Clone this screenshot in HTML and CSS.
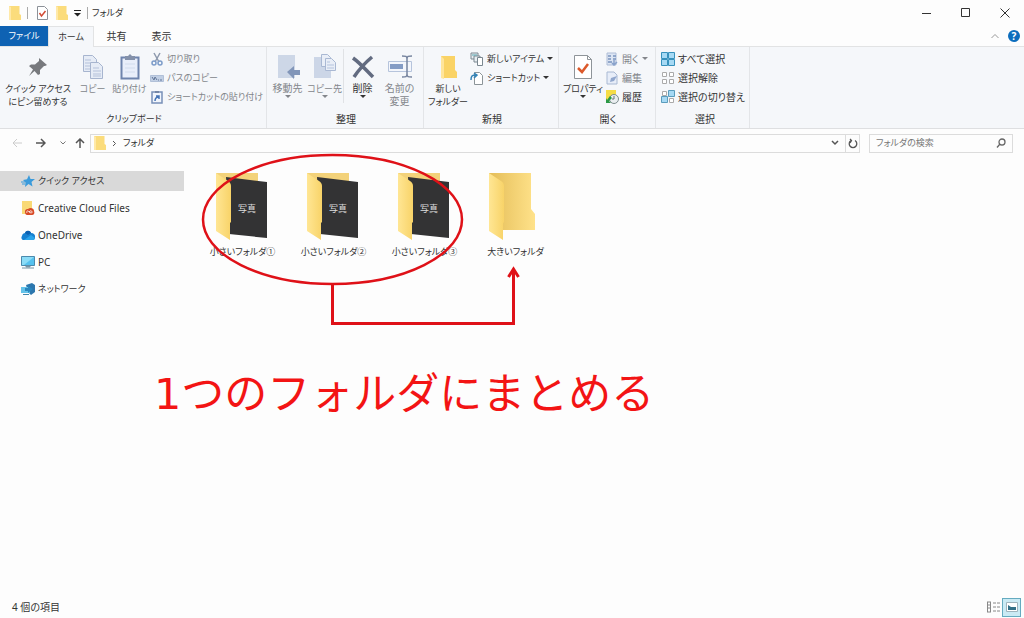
FILE: index.html
```html
<!DOCTYPE html>
<html lang="ja">
<head>
<meta charset="utf-8">
<title>フォルダ</title>
<link rel="stylesheet" href="styles.css">
</head>
<body>
<svg class="defs" aria-hidden="true">
  <defs>
    <linearGradient id="gold" x1="0" x2="1"><stop offset="0" stop-color="#ffe694"/><stop offset="1" stop-color="#f8d368"/></linearGradient>
    <linearGradient id="inner" x1="0" x2="1"><stop offset="0" stop-color="#e4bd58"/><stop offset="1" stop-color="#ffe28a"/></linearGradient>
    <symbol id="mini" viewBox="0 0 12 14"><path d="M0 0h10.500v8l1.500 1v5H0z" fill="#fbdc7c"/><path d="M0 0l2 1v13H0z" fill="#ffe9a8"/></symbol>
    <symbol id="photo-folder" viewBox="2 0 54 70">
      <path d="M2 2h42v20H2z" fill="#f3d27a"/>
      <path d="M12 6l41 5v56l-38-4z" fill="#333334"/>
      <path d="M2 2l12 8c2 1 3 3 3 5v36l-1 1v17L2 60z" fill="url(#gold)"/>
      <text x="33" y="41" text-anchor="middle" class="photo-text">写真</text>
    </symbol>
  </defs>
</svg>
<div class="window">
  <header class="titlebar">
    <svg class="mini" aria-hidden="true"><use href="#mini"/></svg>
    <span class="bar"></span>
    <button class="quick" aria-label="プロパティ"><svg width="11" height="14" viewBox="0 0 11 14"><path d="M.5.5h7l3 3v10H.5z" fill="#fff" stroke="#8c9198"/><path d="M2.500 7l2 3 4-5" fill="none" stroke="#d14b35" stroke-width="1.500"/></svg></button>
    <button class="quick" aria-label="新しいフォルダー"><svg class="mini"><use href="#mini"/></svg></button>
    <button class="quick custom" aria-label="カスタマイズ"><svg width="7" height="7" viewBox="0 0 7 7"><path d="M0 .5h7" stroke="#222"/><path d="M0 3h7L3.500 6.500z" fill="#222"/></svg></button>
    <span class="bar dark"></span>
    <h1 class="title">フォルダ</h1>
    <div class="controls">
      <button aria-label="最小化"><svg width="10" height="10"><path d="M0 5.500h9" stroke="#333"/></svg></button>
      <button aria-label="最大化"><svg width="10" height="10"><path d="M.5.5h8v8h-8z" fill="none" stroke="#333"/></svg></button>
      <button aria-label="閉じる"><svg width="10" height="10"><path d="M.5.500l9 9m0-9l-9 9" stroke="#333"/></svg></button>
    </div>
  </header>
  <nav class="tabs">
    <button class="tab file">ファイル</button>
    <button class="tab active">ホーム</button>
    <button class="tab">共有</button>
    <button class="tab">表示</button>
    <div class="tab-end">
      <button aria-label="リボンを閉じる"><svg width="8" height="6"><path d="M.5 5L4 1.500 7.500 5" fill="none" stroke="#999"/></svg></button>
      <button aria-label="ヘルプ" class="help">?</button>
    </div>
  </nav>
  <section class="ribbon">
    <div class="group clipboard">
      <div class="tools">
        <button class="big"><svg width="26" height="26" viewBox="0 0 26 26"><path d="M14 4l8 7-2 1-1 0-4 4 0 4-2 1-3.500-4L4 22l4-6.500L4 12l2-1.500 4 0 4-3.500z" fill="#77797d"/></svg><span>クイック アクセス<br>にピン留めする</span></button>
        <button class="big off"><svg width="26" height="26" viewBox="0 0 26 26"><g fill="#e6ecf6" stroke="#a7b5cf"><path d="M3.500 1.500h9l4 4v12h-13z"/><path d="M10.500 8.500h8l4 4v12h-12z"/></g><path d="M5 6h6m-6 3h5m-5 3h5m-5 3h5M13 14h6m-6 3h8m-8 3h8m-8 2h8" stroke="#b4c1da"/></svg><span>コピー</span></button>
        <button class="big off"><svg width="26" height="26" viewBox="0 0 26 26"><path d="M4.500 3.500h17v21h-17z" fill="#e9eefa" stroke="#6f84ad" stroke-width="2"/><path d="M8 2h3l2-2 2 2h3v4H8z" fill="#8491aa"/><path d="M8 10h10M8 14h10M8 18h10" stroke="#d2dced"/></svg><span>貼り付け</span></button>
        <div class="smalls off">
          <button><svg width="14" height="14" viewBox="0 0 14 14"><path d="M4 1l5 9m1-9L5 10" stroke="#8d99ad" stroke-width="1.500"/><g fill="none" stroke="#7d9cc9" stroke-width="1.500"><circle cx="4" cy="11" r="2"/><circle cx="10" cy="11" r="2"/></g></svg>切り取り</button>
          <button><svg width="14" height="14" viewBox="0 0 14 14"><path d="M.5 4.500h13v6H.5z" fill="#c1cfe4" stroke="#b1c0d8"/><path d="M2 6l2 3 1-3 2 3M8 9h1m1 0h2" fill="none" stroke="#637799"/></svg>パスのコピー</button>
          <button><svg width="14" height="14" viewBox="0 0 14 14"><path d="M2 2h10v11H2z" fill="#f1f5fc" stroke="#7890b8" stroke-width="1.500"/><path d="M5 1h4v2H5z" fill="#7586a5"/><path d="M5 11c0-3 1-4 4-4M6 6h3v3" fill="none" stroke="#4573b5" stroke-width="1.500"/></svg>ショートカットの貼り付け</button>
        </div>
      </div>
      <div class="caption">クリップボード</div>
    </div>
    <div class="group organize">
      <div class="tools">
        <button class="big off"><svg width="26" height="26" viewBox="0 0 26 26"><path d="M3 1h17v23H3z" fill="#cdd7e7"/><path d="M12 18l7-6v4h6v5h-6v4z" fill="#8296b9"/></svg><span>移動先</span><i class="drop"></i></button>
        <button class="big off"><svg width="26" height="26" viewBox="0 0 26 26"><path d="M2 3h17v21H2z" fill="#ccd6e7"/><g fill="#e9eef7" stroke="#a9b8d3"><path d="M9.500.5h6l3 3v9h-9z"/><path d="M13.500 4.500h6l4 4v8h-10z"/></g><path d="M15 8h3m-3 3h7m-7 3h7" stroke="#b4c3dd"/></svg><span class="kana">コピー先</span><i class="drop"></i></button>
        <span class="divider"></span>
        <button class="big"><svg width="26" height="26" viewBox="0 0 26 26"><path d="M3 4c7 5 12 11 20 19M22 3C16 8 10 14 4 23" fill="none" stroke="#626b80" stroke-width="3.500"/></svg><span>削除</span><i class="drop"></i></button>
        <button class="big off"><svg width="26" height="26" viewBox="0 0 26 26"><path d="M1.500 7.500h23v10h-23z" fill="#f3f6fc" stroke="#b6c4dc"/><path d="M3 10h13v5H3z" fill="#849cc5"/><path d="M15 2c4 0 5 0 5 3v15c0 3-1 3-5 3m10-21c-4 0-5 0-5 3v15c0 3 1 3 5 3" fill="none" stroke="#76849e" stroke-width="1.500"/></svg><span>名前の<br>変更</span></button>
      </div>
      <div class="caption">整理</div>
    </div>
    <div class="group new">
      <div class="tools">
        <button class="big"><svg width="26" height="26" viewBox="0 0 26 26"><path d="M6 2h14v14l2 2v6H6z" fill="#fad366"/><path d="M6 2l3 3v20l-3-1z" fill="#ffe59b"/></svg><span>新しい<br>フォルダー</span></button>
        <div class="smalls">
          <button><svg width="14" height="14" viewBox="0 0 14 14"><g fill="#e8eef2" stroke="#7a8790"><path d="M1 1h7v6H1z"/><path d="M4 4h6v6H4z"/><path d="M7.500 5.500h5v8h-5z" fill="#fff"/></g><path d="M2 3h5" stroke="#56a4af"/></svg>新しいアイテム<i class="drop"></i></button>
          <button><svg width="14" height="14" viewBox="0 0 14 14"><path d="M4.500 1.500h5l3 3v9h-8z" fill="#fff" stroke="#8b9498"/><path d="M1 9c0-4 1-5 5-5M4 2l3 2-3 3" fill="none" stroke="#3383b7" stroke-width="1.500"/></svg>ショートカット<i class="drop"></i></button>
        </div>
      </div>
      <div class="caption">新規</div>
    </div>
    <div class="group open">
      <div class="tools">
        <button class="big"><svg width="26" height="26" viewBox="0 0 26 26"><path d="M4.500 1.500h13l4 4v19h-17z" fill="#fff" stroke="#8e9499"/><path d="M17.500 1.500v4h4" fill="none" stroke="#8e9499"/><path d="M8 14l4 4 6-8" fill="none" stroke="#dc592b" stroke-width="2.500"/></svg><span class="kana">プロパティ</span><i class="drop"></i></button>
        <div class="smalls">
          <button class="off"><svg width="14" height="14" viewBox="0 0 14 14"><path d="M2 1h9v12H2z" fill="#dce5f3" stroke="#aebdd7"/><path d="M3 4h3m2 0h3M3 7h3m2 0h3M3 10h4" stroke="#7a94bf" stroke-width="1.500"/><path d="M9 8v5m-2-2l2 2 3-3" fill="none" stroke="#89a2cb" stroke-width="1.500"/></svg>開く<i class="drop"></i></button>
          <button class="off"><svg width="14" height="14" viewBox="0 0 14 14"><path d="M2 1h7l3 3v9H2z" fill="#e7edf8" stroke="#a9b9d3"/><path d="M5 11l1-4 6-2-3 5z" fill="#91a7cd"/></svg>編集</button>
          <button><svg width="14" height="14" viewBox="0 0 14 14"><path d="M1 0h10v11H1z" fill="#f5dc46"/><circle cx="9" cy="9" r="4.500" fill="#e9eef0" stroke="#7c8b8d"/><path d="M9 6v3H7" fill="none" stroke="#687779"/><path d="M1 8v5h5l-2-2 3-3-2-2-3 4z" fill="#2b9946"/></svg>履歴</button>
        </div>
      </div>
      <div class="caption">開く</div>
    </div>
    <div class="group select">
      <div class="tools">
        <div class="smalls">
          <button><svg width="14" height="14" viewBox="0 0 14 14"><g fill="#a6d9f4" stroke="#3791bc"><path d="M.5.5h6v6h-6zM7.500.5h6v6h-6zM.5 7.500h6v6h-6zM7.500 7.500h6v6h-6z"/></g></svg>すべて選択</button>
          <button><svg width="14" height="14" viewBox="0 0 14 14"><g fill="#fff" stroke="#aaa"><path d="M1.500 1.500h4v4h-4zM8.500 1.500h4v4h-4zM1.500 8.500h4v4h-4zM8.500 8.500h4v4h-4z"/></g></svg>選択解除</button>
          <button><svg width="14" height="14" viewBox="0 0 14 14"><path d="M1.500 1.500h4v4h-4zM8.500 8.500h4v4h-4z" fill="#fff" stroke="#aaa"/><g fill="#a6d9f4" stroke="#5a9cbc"><path d="M7.500.5h6v6h-6zM.5 6.500h6v6h-6z"/></g></svg>選択の切り替え</button>
        </div>
      </div>
      <div class="caption">選択</div>
    </div>
  </section>
  <div class="location">
    <button aria-label="戻る"><svg width="10" height="10"><path d="M10 5H1m4-4L1 5l4 4" fill="none" stroke="#ccc"/></svg></button>
    <button aria-label="進む"><svg width="10" height="10"><path d="M0 5h9M5 1l4 4-4 4" fill="none" stroke="#555" stroke-width="1.500"/></svg></button>
    <button aria-label="最近表示した場所" class="recent"><svg width="6" height="4"><path d="M.5.500L3 3 5.500.5" fill="none" stroke="#777"/></svg></button>
    <button aria-label="上へ" class="up"><svg width="10" height="10"><path d="M5 10V1M1 5l4-4 4 4" fill="none" stroke="#555" stroke-width="1.500"/></svg></button>
    <div class="address">
      <svg class="mini" aria-hidden="true"><use href="#mini"/></svg>
      <svg width="5" height="7" aria-hidden="true"><path d="M1 1l2.500 2.500L1 6" fill="none" stroke="#555"/></svg>
      <a href="#">フォルダ</a>
      <button class="history" aria-label="以前の場所"><svg width="8" height="6"><path d="M1 1l3 3 3-3" fill="none" stroke="#555" stroke-width="1.500"/></svg></button>
      <button class="refresh" aria-label="更新"><svg width="10" height="11" viewBox="0 0 10 11"><path d="M7 2.500a3.800 3.800 0 1 1-4 0M2 1l1.500 1.500L2 5" fill="none" stroke="#555" stroke-width="1.300"/></svg></button>
    </div>
    <label class="search"><input type="search" placeholder="フォルダの検索" aria-label="フォルダの検索"><svg width="10" height="10"><circle cx="6" cy="4" r="3" fill="none" stroke="#666" stroke-width="1.300"/><path d="M4 6L1 9.500" stroke="#666" stroke-width="1.300"/></svg></label>
  </div>
  <main class="content">
    <nav class="sidebar">
      <a href="#" class="current kana"><svg width="14" height="14" viewBox="0 0 14 14"><path d="M8 1l1.500 4 4.500 0-3.500 3 1 4.500L7.500 10 4 13l.5-4.500L2 6l4-.8z" fill="#3b9bdb"/><path d="M0 8h4M1 10h3" stroke="#3b9bdb"/></svg>クイック アクセス</a>
      <a href="#"><svg width="14" height="14" viewBox="0 0 14 14"><path d="M1 0h10v8l2 1v4H1z" fill="#f9d976"/><path d="M4 11a2.500 2.500 0 0 1 3-3c2-2 6-1 6 2 1 2 0 4-2 4H6c-1 0-2-1-2-3z" fill="#d84b28"/><path d="M6 12c-1-2 1-3 2-1l2 1c2 0 1-3-1-2l-1 1" fill="none" stroke="#fff" stroke-width=".8"/></svg>Creative Cloud Files</a>
      <a href="#"><svg width="14" height="14" viewBox="0 0 14 14"><path d="M1 8c0-2 2-3 3-3 1-3 5-3 6 0 3 0 4 2 4 3 1 2-1 4-2 4H3c-3 0-3-3-2-4z" fill="#1681d1"/><path d="M3 12l7-5 4 3c0 1-1 2-2 2z" fill="#2aa4eb"/><path d="M4 5c1-3 5-3 6 0L7 7z" fill="#0c60b0"/></svg>OneDrive</a>
      <a href="#"><svg width="14" height="14" viewBox="0 0 14 14"><path d="M.5 1.500h13v9H.5z" fill="#55c1ee" stroke="#4b8aad"/><path d="M1 2h12L3 10H1z" fill="#8bdcf7"/><path d="M5 11h4v1H5zM1 13h12" fill="#7895a6" stroke="#7895a6"/></svg>PC</a>
      <a href="#" class="kana"><svg width="14" height="14" viewBox="0 0 14 14"><path d="M5 3l6-2 3 2v7l-4 3-3-3z" fill="#2d77ae"/><path d="M0 5h9v6H0z" fill="#63c2e9"/><path d="M7 4l5 3-5 4V9H4V6h3z" fill="#2a86be"/><path d="M2 12.500h6" stroke="#4087ad"/></svg>ネットワーク</a>
    </nav>
    <div class="files">
      <button class="item"><svg width="54" height="70"><use href="#photo-folder"/></svg><span class="kana">小さいフォルダ①</span></button>
      <button class="item"><svg width="54" height="70"><use href="#photo-folder"/></svg><span class="kana">小さいフォルダ②</span></button>
      <button class="item"><svg width="54" height="70"><use href="#photo-folder"/></svg><span class="kana">小さいフォルダ③</span></button>
      <button class="item"><svg width="54" height="70" viewBox="2 0 54 70"><path d="M2 2h42v36l4 5v16H2z" fill="url(#inner)"/><path d="M2 2l12 8c2 1 3 3 3 5v36l-1 1v17L2 60z" fill="url(#gold)"/></svg><span class="kana">大きいフォルダ</span></button>
    </div>
    <div class="annotation">
      <svg width="280" height="190" viewBox="200 150 280 190" overflow="visible" aria-hidden="true"><g fill="none" stroke="#df1118"><ellipse cx="332.500" cy="219.500" rx="129.500" ry="64.500" stroke-width="2.500"/><path d="M332.500 284v39.500h181V270M508.500 277l5-8 5 8" stroke-width="3"/></g></svg>
      <p>1つのフォルダにまとめる</p>
    </div>
  </main>
  <footer class="status">
    <span>4 個の項目</span>
    <div class="views">
      <button aria-label="詳細"><svg width="15" height="12"><path d="M1.500 1v10m3-10v10M1 1h4M1 4h4M1 7h4M1 11h4M7 2h3m1 0h3M7 6h3m1 0h3M7 10h3m1 0h3" fill="none" stroke="#888"/></svg></button>
      <button class="chosen" aria-label="大アイコン"><svg width="12" height="10"><path d="M.5.5h11v9H.5z" fill="#fff" stroke="#9eb4bd"/><path d="M2 3l3 2 5 0v3H2z" fill="#347087"/></svg></button>
    </div>
  </footer>
</div>
</body>
</html>
```
FILE: styles.css
```css
* { box-sizing: border-box; }
body {
  margin: 0;
  background: #fdfdfd;
  color: #333;
  font: 10px/14px "Noto Sans", "Noto Sans CJK JP", sans-serif;
  font-feature-settings: "palt";
}
button {
  margin: 0;
  padding: 0;
  border: 0;
  background: none;
  color: inherit;
  font: inherit;
  font-feature-settings: inherit;
  white-space: nowrap;
}
a { color: inherit; text-decoration: none; }
svg { display: block; flex: none; }
.defs { position: absolute; width: 0; height: 0; }
.window { display: flex; flex-direction: column; min-height: 100vh; }
.mini { width: 12px; height: 14px; }
.kana { font-size: 9px; }

.titlebar { display: flex; align-items: center; height: 26px; padding-left: 9px; }
.bar { width: 1px; height: 12px; margin: 0 9px 0 6px; background: #aaa; }
.quick { margin-right: 8px; }
.custom { margin: 0 2px 0 -2px; }
.bar.dark { margin: 0 4px; }
.title { margin: 0; font-size: 9px; font-weight: 400; }
.controls { display: flex; margin-left: auto; }
.controls button { display: grid; place-items: center; width: 39px; height: 26px; }

.tabs { display: flex; height: 21px; border-bottom: 1px solid #e2e3e4; }
.tab { width: 45px; height: 20px; }
.tab.file, .tab.active { font-size: 9px; }
.tab.file { width: 48px; background: #0e62b3; color: #fff; }
.tab.active { width: 46px; height: 21px; border: 1px solid #e2e3e4; border-width: 1px 1px 0; background: #f5f7fa; }
.tab-end { display: flex; align-items: center; gap: 9px; margin-left: auto; padding-right: 4px; }
.help { width: 12px; height: 12px; border-radius: 50%; background: #0c6dbd; color: #fff; font-weight: 700; line-height: 12px; }

.ribbon { display: flex; height: 82px; border-bottom: 1px solid #dedfe1; background: #f5f7fa; }
.group { display: flex; flex-direction: column; border-right: 1px solid #e3e5e8; padding: 2px 0 0 2px; }
.tools { display: flex; flex: 1; }
.caption { padding-bottom: 2px; text-align: center; }
.clipboard { width: 267px; font-size: 9px; }
.organize { width: 157px; }
.new { width: 135px; }
.new .tools { font-size: 9px; }
.open { width: 97px; }
.select { width: 94px; padding-left: 5px; }
.big { display: flex; flex-direction: column; align-items: center; width: 37px; padding-top: 5px; line-height: 13px; }
.clipboard .big:first-child { width: 72px; }
.new .big, .open .big { width: 44px; }
.big svg { margin-bottom: 2px; }
.off { color: #83868b; }
.divider { width: 1px; height: 54px; background: #e0e2e5; }
.drop { width: 0; height: 0; border: solid transparent; border-width: 3px 3px 0; border-top-color: currentColor; }
.smalls { display: flex; flex-direction: column; }
.smalls button { display: flex; align-items: center; gap: 3px; height: 19px; }
.clipboard .smalls { padding-left: 2px; }

.location { display: flex; align-items: center; height: 28px; padding: 0 11px; }
.location > button { display: grid; place-items: center; width: 12px; height: 18px; margin-right: 12px; }
.location > .recent { width: 8px; margin-right: 7px; }
.location > .up { margin-right: 4px; }
.address { display: flex; flex: 1; align-items: center; gap: 6px; height: 19px; padding-left: 3px; border: 1px solid #dcdcdc; font-size: 9px; }
.history { margin-left: auto; }
.refresh { display: grid; place-items: center; width: 14px; height: 17px; border-left: 1px solid #dcdcdc; }
.search { display: flex; align-items: center; width: 144px; height: 19px; margin-left: 9px; padding: 0 6px; border: 1px solid #dcdcdc; font-size: 9px; }
.search input { flex: 1; min-width: 0; padding: 0; border: 0; outline: 0; background: none; font: inherit; font-feature-settings: inherit; }
.search input::placeholder { color: #777; opacity: 1; }

.content { position: relative; display: flex; flex: 1; padding-top: 14px; }
.sidebar { display: flex; flex-direction: column; gap: 7px; width: 184px; }
.sidebar a { display: flex; align-items: center; gap: 3px; height: 20px; padding-left: 21px; }
.sidebar .current { background: #d9d9d9; }
.files { display: flex; align-items: flex-start; padding-left: 13px; }
.item { display: flex; flex-direction: column; align-items: center; gap: 4px; width: 91px; }
.photo-text { fill: #ddd; font-size: 9px; }
/* Markup drawn over the file list */
.annotation { position: absolute; top: -7px; left: 200px; pointer-events: none; color: #f31414; }
.annotation p { margin: 24px 0 0 -46px; font: 43px/60px "DejaVu Sans", "Noto Sans CJK JP", sans-serif; font-feature-settings: normal; white-space: nowrap; }

.status { display: flex; align-items: center; height: 22px; padding: 0 3px 0 12px; }
.views { display: flex; align-items: center; gap: 1px; margin-left: auto; }
.chosen { display: grid; place-items: center; width: 19px; height: 19px; border: 1px solid #65abc0; background: #caeaf4; }
```
